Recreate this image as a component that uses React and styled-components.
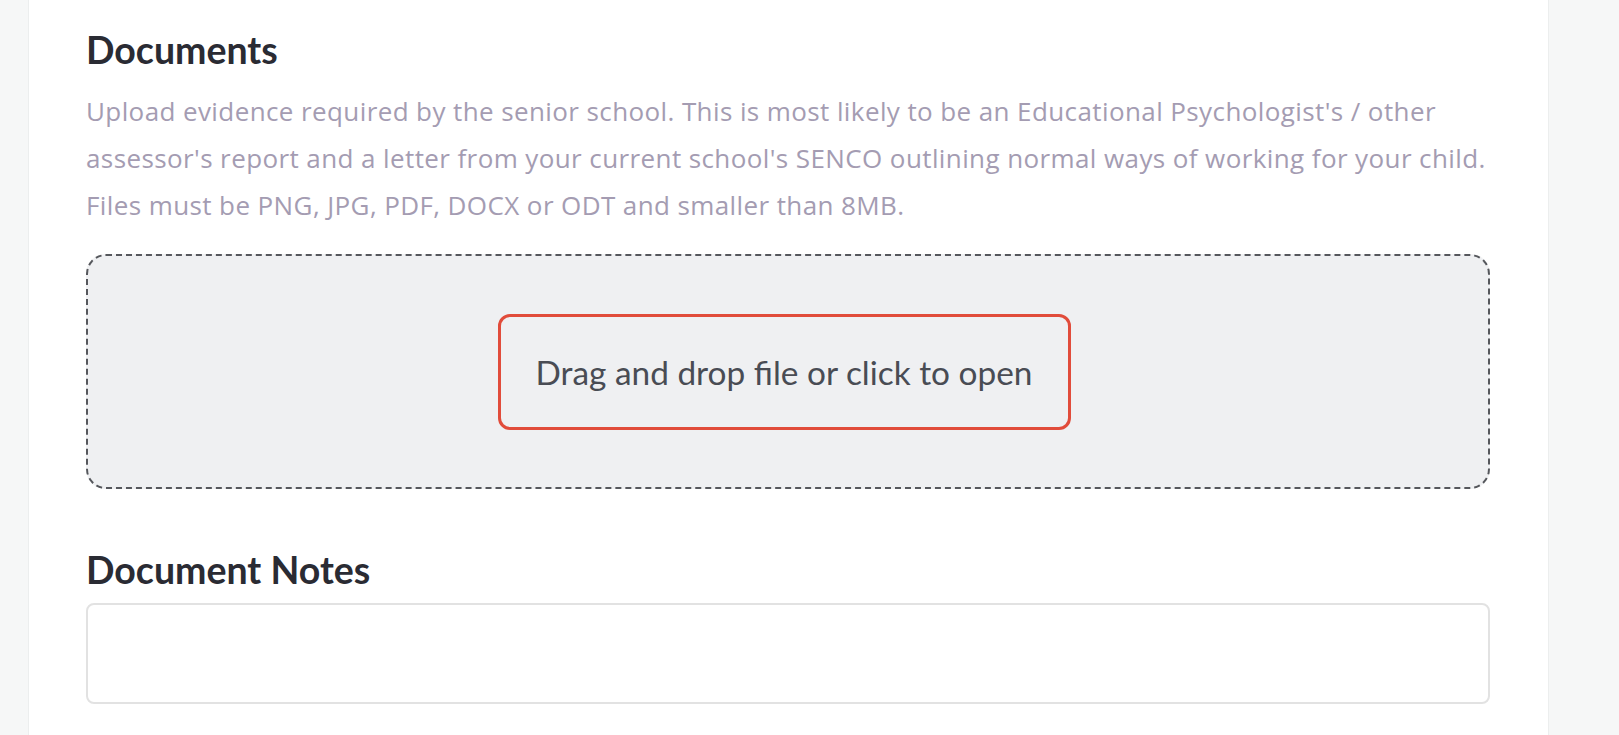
import React from "react";
import styled, { createGlobalStyle } from "styled-components";

const Global = createGlobalStyle`
  html, body { margin: 0; padding: 0; background: #f6f7f7; }
  body { font-family: Lato, "Open Sans", sans-serif; }
  * { box-sizing: border-box; }
`;

const Page = styled.div`
  display: flex;
  min-height: 735px;
  padding: 0 70px 0 28px;
  background: #f6f7f7;
`;

const Card = styled.section`
  flex: 1;
  background: #fff;
  border-left: 1px solid #eceeee;
  border-right: 1px solid #eceeee;
  padding: 28px 58px 0 57px;
  display: flex;
  flex-direction: column;
`;

const Heading = styled.h2`
  margin: 0;
  font-family: Lato, sans-serif;
  font-weight: 700;
  font-size: 37.5px;
  line-height: 43px;
  color: #2a2b33;
`;

const Help = styled.p`
  margin: 17px 0 25px;
  font-family: "Open Sans", sans-serif;
  font-size: 26px;
  line-height: 47px;
  letter-spacing: 0.4px;
  color: #a49cb2;
`;

const Dropzone = styled.div`
  height: 235px;
  background: #eff0f2;
  border: 2px dashed #55575c;
  border-radius: 20px;
  display: flex;
  align-items: center;
  justify-content: center;
  margin-bottom: 59px;
`;

const OpenButton = styled.button`
  width: 573px;
  height: 116px;
  margin-right: 8px;
  border: 3px solid #e14c3b;
  border-radius: 12px;
  background: transparent;
  font-family: Lato, sans-serif;
  font-size: 33.4px;
  color: #494c54;
  cursor: pointer;
`;

const Notes = styled.textarea`
  margin-top: 12px;
  height: 101px;
  border: 2px solid #e2e2e2;
  border-radius: 8px;
  resize: none;
  font-family: Lato, sans-serif;
  font-size: 26px;
  padding: 12px 16px;
  outline: none;
`;

export default function App() {
  return (
    <>
      <Global />
      <Page>
        <Card>
          <Heading>Documents</Heading>
          <Help>
            Upload evidence required by the senior school. This is most likely to be an Educational Psychologist's / other
            assessor's report and a letter from your current school's SENCO outlining normal ways of working for your child.
            Files must be PNG, JPG, PDF, DOCX or ODT and smaller than 8MB.
          </Help>
          <Dropzone>
            <OpenButton type="button">Drag and drop file or click to open</OpenButton>
          </Dropzone>
          <Heading>Document Notes</Heading>
          <Notes />
        </Card>
      </Page>
    </>
  );
}
